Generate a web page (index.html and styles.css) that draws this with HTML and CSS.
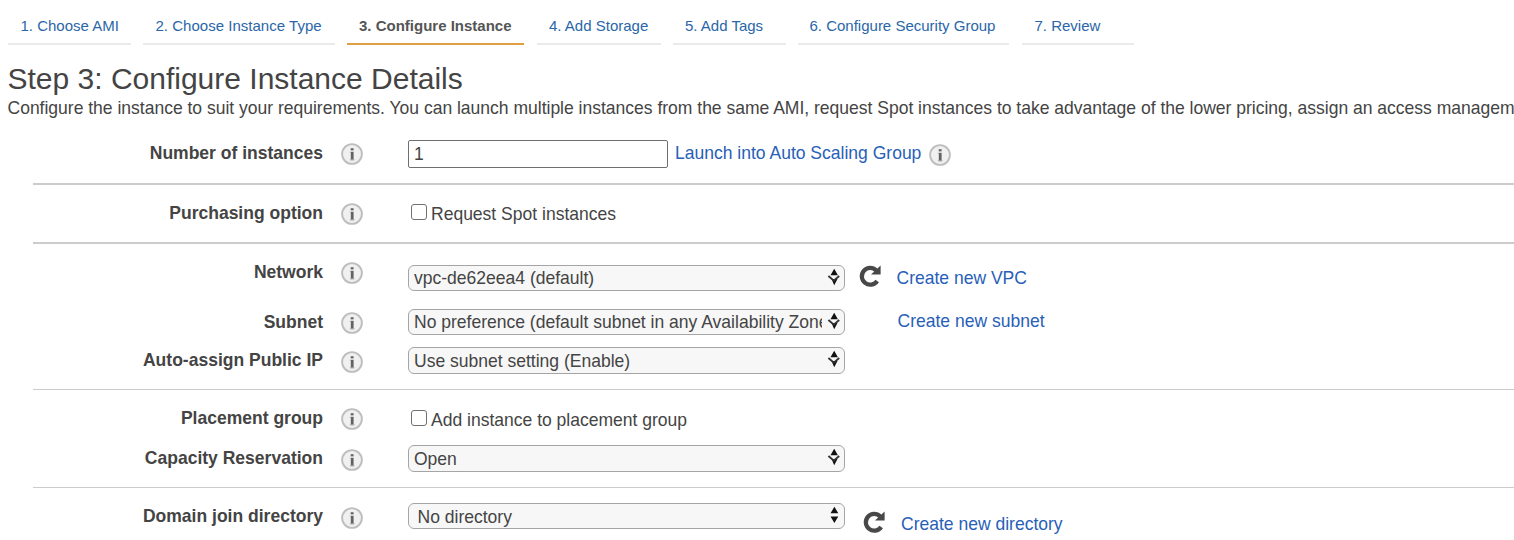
FILE: index.html
```html
<!DOCTYPE html>
<html lang="en">
<head>
<meta charset="utf-8">
<title>Configure Instance Details</title>
<link rel="stylesheet" href="styles.css">
</head>
<body>
<svg width="0" height="0" class="defs">
  <defs>
    <symbol id="info" viewBox="0 0 22 22">
      <circle cx="11" cy="11" r="9.9" fill="#f0f0f0" stroke="#bebebe" stroke-width="1.9"/>
      <path d="M9.7 5.2h2.9v2.2H9.7z" fill="#666"/>
      <path d="M9.8 8.8h2.8v8.4H9.8z" fill="#626262"/>
      <path d="M8.8 8.8h1v1h-1zM8.9 16.2h4.6v1H8.9z" fill="#aaa"/>
    </symbol>
    <symbol id="refresh" viewBox="0 0 24 24">
      <path d="M18.2 6.4A8.4 8.4 0 1 0 19.2 17" fill="none" stroke="#484848" stroke-width="4.2"/>
      <path d="M22.6 1.4V10.4H13z" fill="#484848"/>
    </symbol>
    <symbol id="arrows" viewBox="0 0 14 18">
      <path d="M7.4 .8l3.9 6.4H3.5zM3.5 10.6h7.8L7.4 17z" fill="#111"/>
    </symbol>
    <symbol id="arrows-chevron" viewBox="0 0 14 18">
      <path d="M7.2 .8l3.7 6.4H3.5zM4.5 11h6L7.2 17.2z" fill="#111"/>
      <path d="M1.4 8L6.8 12.6L12.2 8" fill="none" stroke="#333" stroke-width="1.9"/>
    </symbol>
  </defs>
</svg>
<nav class="steps">
  <a class="step ami">1. Choose AMI</a>
  <a class="step type">2. Choose Instance Type</a>
  <a class="step current">3. Configure Instance</a>
  <a class="step storage">4. Add Storage</a>
  <a class="step tags">5. Add Tags</a>
  <a class="step security">6. Configure Security Group</a>
  <a class="step review">7. Review</a>
</nav>
<h1 class="title">Step 3: Configure Instance Details</h1>
<p class="intro">Configure the instance to suit your requirements. You can launch multiple instances from the same AMI, request Spot instances to take advantage of the lower pricing, assign an access managem</p>
<main class="form">
  <section class="group thick">
    <div class="row count">
      <label class="label">Number of instances</label>
      <svg class="info"><use href="#info"/></svg>
      <div class="control"><input class="field" value="1"><a class="link launch">Launch into Auto Scaling Group</a><svg class="info-after"><use href="#info"/></svg></div>
    </div>
  </section>
  <section class="group thick">
    <div class="row purchase">
      <label class="label">Purchasing option</label>
      <svg class="info"><use href="#info"/></svg>
      <div class="control"><input type="checkbox" class="check"><span class="check-text">Request Spot instances</span></div>
    </div>
  </section>
  <section class="group">
    <div class="row network">
      <label class="label">Network</label>
      <svg class="info"><use href="#info"/></svg>
      <div class="control"><div class="picker"><select class="select"><option>vpc-de62eea4 (default)</option></select><svg class="arrows"><use href="#arrows-chevron"/></svg></div><svg class="refresh"><use href="#refresh"/></svg><a class="link vpc">Create new VPC</a></div>
    </div>
    <div class="row subnet">
      <label class="label">Subnet</label>
      <svg class="info"><use href="#info"/></svg>
      <div class="control"><div class="picker"><select class="select"><option>No preference (default subnet in any Availability Zone)</option></select><svg class="arrows"><use href="#arrows-chevron"/></svg></div><a class="link new-subnet">Create new subnet</a></div>
    </div>
    <div class="row public-ip">
      <label class="label">Auto-assign Public IP</label>
      <svg class="info"><use href="#info"/></svg>
      <div class="control"><div class="picker tall"><select class="select"><option>Use subnet setting (Enable)</option></select><svg class="arrows"><use href="#arrows-chevron"/></svg></div></div>
    </div>
  </section>
  <section class="group">
    <div class="row placement">
      <label class="label">Placement group</label>
      <svg class="info"><use href="#info"/></svg>
      <div class="control"><input type="checkbox" class="check"><span class="check-text">Add instance to placement group</span></div>
    </div>
    <div class="row capacity">
      <label class="label">Capacity Reservation</label>
      <svg class="info"><use href="#info"/></svg>
      <div class="control"><div class="picker tall"><select class="select"><option>Open</option></select><svg class="arrows"><use href="#arrows-chevron"/></svg></div></div>
    </div>
  </section>
  <section class="group last">
    <div class="row domain">
      <label class="label">Domain join directory</label>
      <svg class="info"><use href="#info"/></svg>
      <div class="control"><div class="picker"><select class="select inset"><option>No directory</option></select><svg class="arrows"><use href="#arrows"/></svg></div><svg class="refresh"><use href="#refresh"/></svg><a class="link new-dir">Create new directory</a></div>
    </div>
  </section>
</main>
</body>
</html>
```
FILE: styles.css
```css
* { box-sizing: border-box; }
body {
  margin: 0;
  height: 540px;
  overflow: hidden;
  background: #fff;
  color: #444;
  font: 17.53px/20px "Liberation Sans", Arial, sans-serif;
}
.defs { display: block; }
svg { display: block; flex: none; }

.steps {
  display: flex;
  height: 45px;
  padding-left: 8px;
  gap: 12px;
  font-size: 15px;
}
.step {
  flex: none;
  padding: 16px 0 0 12px;
  border-bottom: 2px solid #e9ebeb;
  color: #2a66a8;
  white-space: nowrap;
}
.ami { width: 123px; padding-left: 12.5px; }
.type { width: 192px; padding-left: 12.5px; letter-spacing: 0.02px; }
.current { width: 177px; color: #555; font-weight: bold; border-color: #e0a041; }
.storage { width: 124px; margin-left: 1px; }
.tags { width: 113px; }
.security { width: 211px; padding-left: 11.5px; }
.review { width: 112px; margin-left: 1px; padding-left: 12.5px; }

.title {
  margin: 0;
  padding: 16px 0 0 7.5px;
  height: 52px;
  font-size: 30px;
  line-height: 36px;
  font-weight: normal;
}
.intro {
  margin: 0;
  padding: 1px 0 0 7.5px;
  height: 26px;
  line-height: 21px;
  letter-spacing: -0.006px;
  white-space: nowrap;
}

.group { margin-left: 33px; border-bottom: 1px solid #ccc; }
.thick { border-bottom: 2px solid #ccc; }
.last { border: 0; }
.row { display: flex; align-items: flex-start; }
.label { width: 290px; text-align: right; font-weight: bold; }
.info { width: 22px; height: 22px; margin-left: 18px; }
.control { display: flex; align-items: flex-start; margin-left: 45px; }
.link { color: #2860b8; white-space: nowrap; }

.field {
  width: 260px;
  height: 28px;
  padding: 0 5px;
  border: 1px solid #6f6f6f;
  border-radius: 2px;
  color: #444;
  font: inherit;
}
.launch { margin: 3px 0 0 7px; }
.info-after { width: 22px; height: 22px; margin: 4px 0 0 8px; }

.check {
  appearance: none;
  width: 16px;
  height: 16px;
  margin: 0 4px 0 3px;
  border: 1px solid #707070;
  border-radius: 3px;
}

.picker { position: relative; width: 437px; height: 26px; }
.tall { height: 27px; }
.select {
  appearance: none;
  display: block;
  width: 100%;
  height: 100%;
  padding: 0 22px 0 5px;
  border: 1px solid #a5a5a5;
  border-radius: 6px;
  background: #f7f7f7;
  color: #444;
  font: inherit;
}
.inset { padding: 1px 22px 0 8.5px; }
.arrows { position: absolute; top: 3px; right: 4px; width: 14px; height: 18px; }
.refresh { width: 24px; height: 24px; }

.count { height: 60px; padding-top: 20px; }
.count .control { margin-top: -3px; }

.purchase { height: 57px; padding-top: 18px; }
.purchase .check { margin-top: 1px; }
.purchase .check-text { margin-top: 1px; }

.network { height: 56px; padding-top: 18px; }
.network .control { margin-top: 3px; }
.network .refresh { margin: -1px 0 0 13px; }
.vpc { margin: 3px 0 0 14.5px; }

.subnet { height: 41px; padding-top: 12px; }
.subnet .control { margin-top: -3px; }
.new-subnet { margin: 2px 0 0 52.5px; }

.public-ip { height: 48px; padding-top: 9px; }
.public-ip .info { margin-top: 1px; }
.public-ip .control { margin-top: -3px; }

.placement { height: 48px; padding-top: 18px; }
.placement .check { margin-top: 2px; }
.placement .check-text { margin-top: 2px; }

.capacity { height: 49px; padding-top: 10px; }
.capacity .info { margin-top: 1px; }
.capacity .control { margin-top: -3px; }

.domain { height: 52px; padding-top: 18px; }
.domain .info { margin-top: 1px; }
.domain .control { margin-top: -3px; }
.domain .refresh { margin: 7px 0 0 17px; }
.new-dir { margin: 11px 0 0 15px; }
```
